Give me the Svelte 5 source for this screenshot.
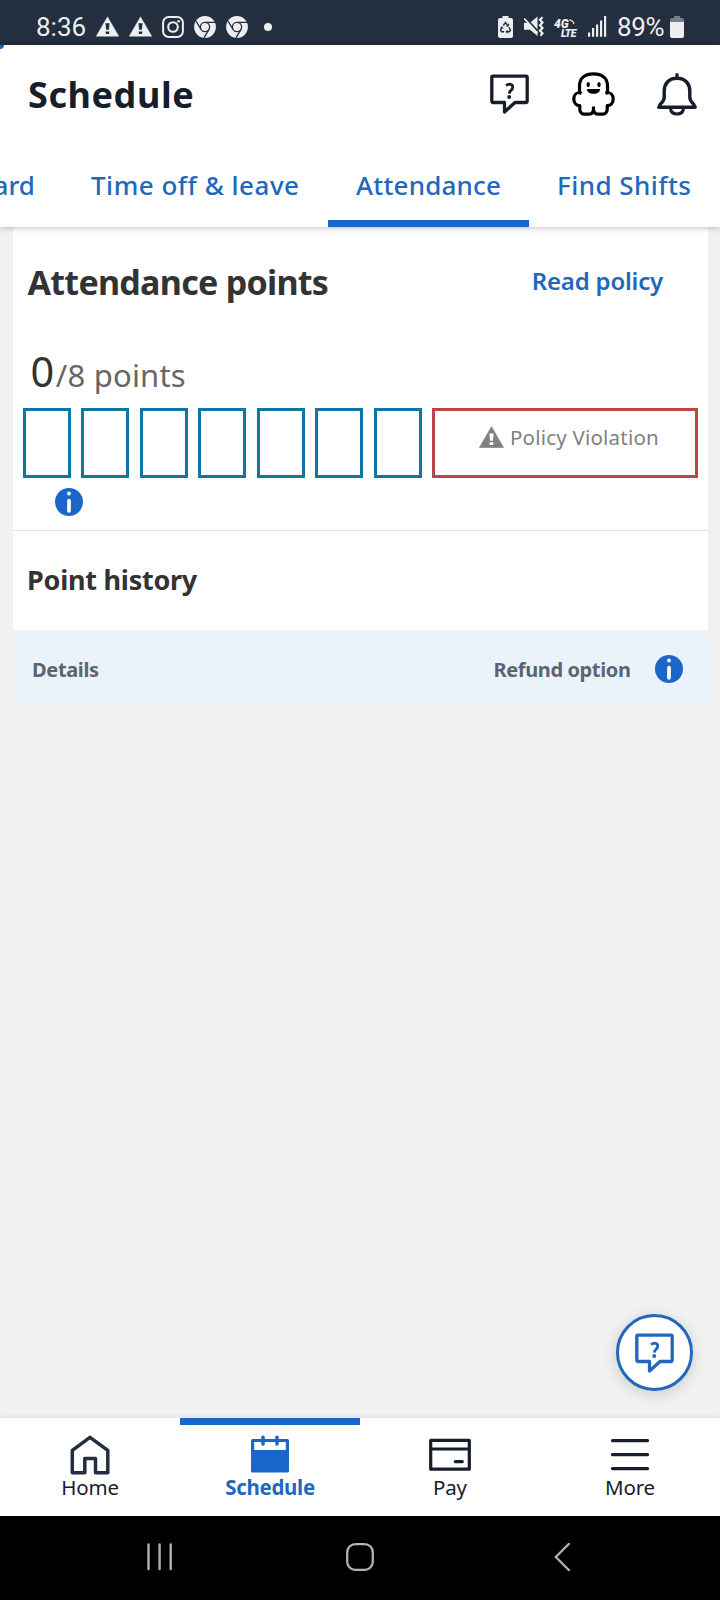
<script>
  const slots = Array(7).fill(0);
</script>

{#snippet warn(w, h, bg)}
  <svg width={w} height={h} viewBox="0 0 24 21">
    <path d="M12 0.3 23.8 20.8H0.2Z" fill="currentColor" stroke="currentColor" stroke-width=".4" stroke-linejoin="round" />
    <path d="M9.900 7.200h4.200l-.7 6.800h-2.800z M10.200 15.600h3.600v2.600h-3.600z" fill={bg} />
  </svg>
{/snippet}

{#snippet chrome()}
  <svg width="22" height="22" viewBox="0 0 22 22">
    <circle cx="11" cy="11" r="10.9" fill="currentColor" />
    <g fill="none" stroke="#232f3e" stroke-width="1.3">
      <circle cx="11" cy="11" r="4.6" />
      <path d="M11 6.4H21M7 13.3 2 5M15 13.3 10 21.8" />
    </g>
  </svg>
{/snippet}

{#snippet chat()}
  <svg width="39" height="40" viewBox="0 0 39 40">
    <path d="M3 2.200H36a1.200 1.200 0 0 1 1.200 1.200V27.300a1.200 1.200 0 0 1-1.200 1.200H25L14.500 38V28.500H3A1.200 1.200 0 0 1 1.800 27.300V3.400A1.200 1.200 0 0 1 3 2.200Z" fill="none" stroke="currentColor" stroke-width="3.300" stroke-linejoin="round" />
    <path d="M16 11.500Q18 10.200 19.700 10.200Q22.700 10.400 22.700 13.200Q22.700 15 21 16.300Q19.400 17.500 19.300 19.600" fill="none" stroke="currentColor" stroke-width="2.800" />
    <circle cx="19.200" cy="22.900" r="2" fill="currentColor" />
  </svg>
{/snippet}

{#snippet info()}
  <svg class="info" width="28" height="28" viewBox="0 0 28 28">
    <circle cx="14" cy="14" r="14" fill="#1a67c9" />
    <circle cx="14" cy="5.5" r="1.9" fill="#fff" />
    <path d="M14 12.6V22.8" stroke="#fff" stroke-width="3.7" stroke-linecap="round" />
  </svg>
{/snippet}

<div class="screen">
  <div class="status">
    <span class="clock">8:36</span>
    <div class="notes">
      {@render warn(23, 21, '#232f3e')}
      {@render warn(23, 21, '#232f3e')}
      <svg width="22" height="22" viewBox="0 0 22 22" fill="none" stroke="currentColor">
        <rect x="1.1" y="1.1" width="19.8" height="19.8" rx="5.5" stroke-width="2" />
        <circle cx="11" cy="11" r="4.8" stroke-width="2.1" />
        <circle cx="16.6" cy="5.2" r="1.3" fill="currentColor" stroke="none" />
      </svg>
      {@render chrome()}
      {@render chrome()}
      <i class="dot"></i>
    </div>
    <svg class="saver" width="15" height="22" viewBox="0 0 15 22">
      <path d="M4.5 0h6v2H13a2 2 0 0 1 2 2v16a2 2 0 0 1-2 2H2a2 2 0 0 1-2-2V4a2 2 0 0 1 2-2h2.500Z" fill="currentColor" />
      <g fill="none" stroke="#232f3e" stroke-width="1.500">
        <path d="M5.200 9.600 7.500 6.600 9.800 9.600M3.900 11.300 2.700 14.300 3.700 15.800H6.200M11.100 11.300 12.300 14.300 11.300 15.800H8.300" />
        <path d="M8 10.200 10.500 10 10.400 7.600M9.600 14 8 15.800 9.600 17.500M2.400 12 4 10.800 5.200 12.600" stroke-width="1" />
      </g>
    </svg>
    <svg class="mute" width="20" height="21" viewBox="0 0 20 21">
      <path d="M0 6.800H6L13.500 0.500V20L6 13.800H0Z" fill="currentColor" />
      <path d="M0.200 0.600 13.500 15" stroke="#232f3e" stroke-width="2" />
      <path d="M0.300 2.600 13.300 17" stroke="currentColor" stroke-width="1.800" />
      <path d="M18.500 1.300 16 3.800 18.500 6.500 16 9.300 18.500 12 16 14.700 18.500 17.300 16.500 19.800" fill="none" stroke="currentColor" stroke-width="2.200" />
    </svg>
    <div class="lte"><b>4G</b><b class="sub">LTE</b>
      <svg width="6" height="6" viewBox="0 0 6 6"><path d="M0 1Q4 1 5 5" fill="none" stroke="currentColor" stroke-width="1.200" /></svg>
    </div>
    <svg class="signal" width="19" height="21" viewBox="0 0 19 21" fill="currentColor">
      <rect x="0" y="16.500" width="2.200" height="4.200" /><rect x="4" y="12" width="2.200" height="8.700" /><rect x="8" y="8.500" width="2.200" height="12.200" /><rect x="12" y="4.500" width="2.200" height="16.200" /><rect x="16" y="0" width="2.200" height="20.700" />
    </svg>
    <span class="pct">89%</span>
    <svg class="batt" width="14" height="22" viewBox="0 0 14 22">
      <path d="M4 0h6v2h2a2 2 0 0 1 2 2v3H0V4a2 2 0 0 1 2-2h2Z" fill="#77808a" />
      <path d="M0 6h14v14a2 2 0 0 1-2 2H2a2 2 0 0 1-2-2Z" fill="currentColor" />
    </svg>
  </div>

  <header>
    <i class="spot"></i>
    <div class="titlebar">
      <h1>Schedule</h1>
      <div class="actions">
        {@render chat()}
        <svg width="43" height="44" viewBox="0 0 43 44">
          <path d="M7.500 20.500V14C7.500 6 13 1.900 21.500 1.900S35.500 6 35.500 14v6.500C39 20.500 41.200 23.500 41.200 27c0 4-2.700 6.700-6 6.700V37.500c0 3-2.200 4.700-5.200 4.700H26.500c-2.600 0-4.500-1.500-5-4.200-.5 2.700-2.400 4.200-5 4.200H13c-3 0-5.200-1.700-5.200-4.700V33.700c-3.300 0-6-2.700-6-6.700 0-3.500 2.200-6.500 5.700-6.500Z" fill="none" stroke="#000" stroke-width="3.200" stroke-linejoin="round" />
          <path d="M7.500 20.500 9.500 21.500M35.500 20.500 33.500 21.500M21.500 34.500V39" stroke="#000" stroke-width="3.200" fill="none" />
          <ellipse cx="16.200" cy="12.600" rx="1.700" ry="2.600" /><ellipse cx="27" cy="12.600" rx="1.700" ry="2.600" />
          <path d="M14.800 16.900H28.200C28 20 25.300 21.800 21.500 21.800S15 20 14.800 16.900Z" />
        </svg>
        <svg width="40" height="43" viewBox="0 0 40 43" fill="none" stroke="#161d2b" stroke-width="3.400" stroke-linejoin="round" stroke-linecap="round">
          <path d="M20 1.700V5M20 5.200C11.500 5.200 7.200 11 7.200 18V24.500C7.200 27.500 5.500 29 3.500 31L1.800 34.300H38.200L36.500 31C34.500 29 32.800 27.500 32.800 24.500V18C32.800 11 28.500 5.200 20 5.200Z" />
          <path d="M13.500 35.500C13.800 39 16.500 41 20 41S26.200 39 26.500 35.500" stroke-width="3" />
        </svg>
      </div>
    </div>
    <nav class="tabs">
      <a class="t0"><span>Standard</span></a>
      <a class="t1"><span>Time off &amp; leave</span></a>
      <a class="t2 on"><span>Attendance</span></a>
      <a class="t3"><span>Find Shifts</span></a>
    </nav>
  </header>

  <main>
    <section class="card">
      <div class="head">
        <h2>Attendance points</h2>
        <a class="policy">Read policy</a>
      </div>
      <div class="score"><span class="zero">0</span><span class="of">/8 points</span></div>
      <div class="meter">
        {#each slots as _}<i class="slot"></i>{/each}
        <div class="violation">{@render warn(25, 22, '#fff')}<span>Policy Violation</span></div>
      </div>
      <div class="hint">{@render info()}</div>
      <h3>Point history</h3>
      <div class="row">
        <span class="det">Details</span>
        <span class="ref">Refund option</span>
        {@render info()}
      </div>
    </section>
    <button class="fab" aria-label="Help">{@render chat()}</button>
  </main>

  <nav class="bottom">
    <a>
      <svg width="40" height="40" viewBox="0 0 40 40"><path d="M2.300 15.300 20 2.300 37.800 15.300V37.700H25.500V23.500H14.800V37.700H2.300Z" fill="none" stroke="#232f3e" stroke-width="3.500" stroke-linejoin="round" /></svg>
      <span class="l0">Home</span>
    </a>
    <a class="on">
      <svg width="40" height="40" viewBox="0 0 40 40" fill="#1a67c9"><path d="M2.500 4H37.500A1.500 1.500 0 0 1 39 5.500V36A1.500 1.500 0 0 1 37.500 37.500H2.500A1.500 1.500 0 0 1 1 36V5.500A1.500 1.500 0 0 1 2.500 4Z" /><path d="M4.200 7H35.800V15H4.200Z" fill="#fff" /><path d="M13 2.300V9M27 2.300V9" stroke="#1a67c9" stroke-width="3.600" stroke-linecap="round" /></svg>
      <span class="l1">Schedule</span>
    </a>
    <a>
      <svg width="42" height="40" viewBox="0 0 42 40" fill="none" stroke="#161d2b" stroke-width="3.200" stroke-linejoin="round" stroke-linecap="round"><path d="M1.700 5.400H40.300V34.200H1.700ZM2 14H40M26.300 26.600H33.300" /></svg>
      <span class="l2">Pay</span>
    </a>
    <a>
      <svg width="40" height="40" viewBox="0 0 40 40" stroke="#161d2b" stroke-width="3.400" stroke-linecap="round"><path d="M2.500 5.600H37.500M2.500 19.600H37.500M2.500 33.600H37.500" /></svg>
      <span class="l3">More</span>
    </a>
  </nav>

  <div class="system">
    <svg width="26" height="28" viewBox="0 0 26 28" stroke="#b2b2b2" stroke-width="2.400" stroke-linecap="round"><path d="M1.500 1.500V26M12.600 1.500V26M23.700 1.500V26" /></svg>
    <svg class="home" width="28" height="28" viewBox="0 0 28 28"><rect x="1.200" y="1.200" width="25.600" height="25.600" rx="8" fill="none" stroke="#b2b2b2" stroke-width="2.300" /></svg>
    <svg class="back" width="16" height="28" viewBox="0 0 16 28" fill="none" stroke="#b2b2b2" stroke-width="2.300"><path d="M15 .8 1.800 14 15 27.200" stroke-linecap="round" /></svg>
  </div>
</div>

<style>
  :global(body) { background: #f1f1f1; }
  .screen { width: 720px; height: 1600px; display: flex; flex-direction: column; overflow: hidden; font-family: "Noto Sans", sans-serif; background: #f1f1f1; white-space: nowrap; }
  svg { display: block; flex: none; }
  h1, h2, h3 { margin: 0; }

  .status { height: 45px; box-sizing: border-box; padding: 8px 36px 0; display: flex; align-items: center; background: #232f3e; color: #eceef0; font-family: Roboto, sans-serif; flex: none; }
  .clock { width: 60px; font-size: 26px; line-height: 36px; }
  .notes { display: flex; align-items: center; gap: 10px; }
  .dot { width: 8px; height: 8px; border-radius: 50%; background: currentColor; margin-left: 6px; }
  .saver { margin-left: auto; }
  .mute { margin-left: 11px; }
  .lte { position: relative; width: 22px; height: 22px; margin-left: 10px; font: italic 900 12px/10px Roboto, sans-serif; display: flex; flex-direction: column; padding-top: 3px; box-sizing: border-box; }
  .lte .sub { align-self: flex-end; font-size: 10.500px; line-height: 9px; letter-spacing: -.5px; }
  .lte svg { position: absolute; right: 1px; top: 3px; }
  .signal { margin-left: 12px; }
  .pct { width: 50px; margin-left: 10px; font-size: 26px; line-height: 36px; letter-spacing: -.3px; }
  .batt { margin-left: 3px; }

  header { position: relative; height: 182px; flex: none; background: #fff; box-shadow: 0 1px 6px rgba(0,0,0,.25); z-index: 1; overflow: visible; }
  .spot { position: absolute; left: -5px; top: 0; width: 9px; height: 4px; background: #1a67c9; border-radius: 0 0 6px 6px; }
  .titlebar { height: 98px; padding: 0 23px 0 28px; display: flex; justify-content: space-between; align-items: center; }
  h1 { font-size: 36px; font-weight: 700; color: #161d2b; letter-spacing: .57px; }
  .actions { display: flex; align-items: center; gap: 42.500px; color: #161d2b; }
  .tabs { height: 84px; display: flex; justify-content: flex-end; }
  .tabs a { box-sizing: border-box; padding: 0 28px; line-height: 85px; font-size: 26px; font-weight: 500; color: #2168bd; flex: none; }
  .t1 { width: 265px; letter-spacing: .5px; }
  .t2 { width: 201px; letter-spacing: .2px; }
  .t3 { width: 191px; letter-spacing: .45px; }
  .tabs .on { box-shadow: inset 0 -7px #1a67c9; }

  main { flex: 1; position: relative; padding: 0 12px 0 13px; }
  .card { background: #fff; color: #333; }
  .head { height: 109px; display: flex; justify-content: space-between; align-items: center; padding: 0 45px 0 14.500px; }
  h2 { font-size: 34px; font-weight: 700; letter-spacing: -.72px; }
  .policy { font-size: 24px; font-weight: 600; color: #2168bd; padding-bottom: 2px; letter-spacing: -.2px; }
  .score { height: 72px; box-sizing: border-box; padding: 10px 0 0 17.500px; display: flex; align-items: baseline; line-height: 50px; }
  .zero { font-size: 41.500px; letter-spacing: 1.500px; }
  .of { font-size: 31px; color: #666; letter-spacing: .2px; }
  .meter { display: flex; gap: 10.500px; padding: 0 10px 0 9.900px; height: 70px; }
  .slot { width: 48px; box-sizing: border-box; border: 3px solid #1076a3; flex: none; }
  .violation { flex: 1; box-sizing: border-box; border: 3px solid #bc4545; color: #808080; display: flex; padding: 0 0 12px 43.500px; align-items: center; gap: 6px; font-size: 20.500px; letter-spacing: .22px; }
  .hint { height: 52px; padding: 10px 0 0 42px; box-sizing: border-box; }
  h3 { border-top: 1px solid #e3e3e3; height: 100px; box-sizing: border-box; padding-left: 14px; line-height: 97px; font-size: 27px; font-weight: 700; letter-spacing: -.25px; }
  .row { height: 77px; background: #ebf3fa; border: 1px solid #f0f3f5; border-top: 0; box-sizing: border-box; display: flex; align-items: center; padding: 2px 24px 0 18px; font-size: 20px; font-weight: 700; color: #5a6572; }
  .det { letter-spacing: -.35px; }
  .ref { margin-left: auto; margin-right: 24.500px; letter-spacing: -.38px; }
  .fab { position: absolute; right: 27px; bottom: 27px; width: 77px; height: 77px; padding: 0; border: 3px solid #2067bd; border-radius: 50%; background: #fff; color: #2067bd; display: grid; place-items: center; box-shadow: 0 3px 14px rgba(0,0,0,.16); }

  .bottom { position: relative; height: 98px; flex: none; display: grid; grid-template-columns: repeat(4, 180px); background: #fff; box-shadow: 0 -1px 5px rgba(0,0,0,.08); }
  .bottom a { display: flex; flex-direction: column; align-items: center; padding-top: 17px; font-size: 20.500px; line-height: 28px; color: #161d2b; letter-spacing: -.2px; }
  .bottom .on { box-shadow: inset 0 7px #1a67c9; color: #2168bd; font-weight: 700; letter-spacing: -.3px; }
  .bottom span { margin-top: -2px; }

  .system { height: 84px; flex: none; background: #000; display: flex; align-items: center; padding: 0 0 3px 147px; box-sizing: border-box; }
  .home { margin-left: 173px; }
  .back { margin-left: 180px; }
</style>
